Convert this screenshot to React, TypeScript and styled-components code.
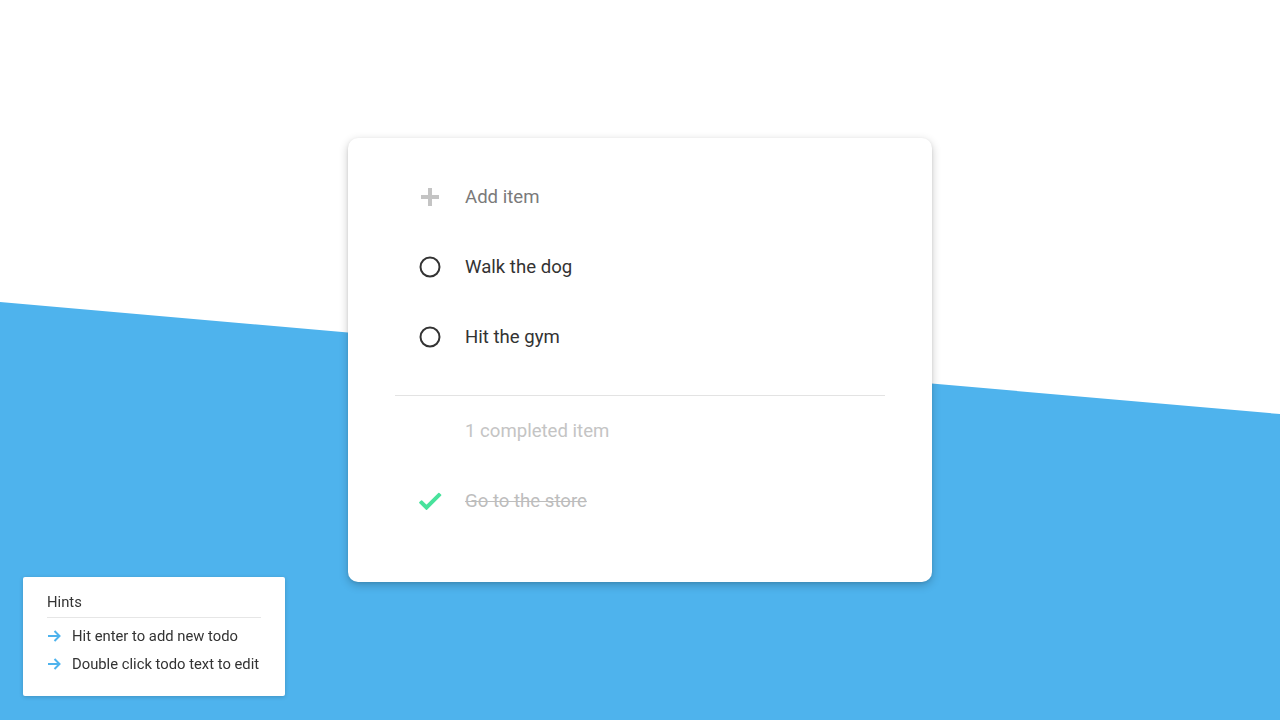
import * as React from 'react';
import styled, {createGlobalStyle} from 'styled-components';

const GlobalStyle = createGlobalStyle`
  html, body {
    margin: 0;
    padding: 0;
    background: #fff;
    overflow: hidden;
  }
  * {
    box-sizing: border-box;
  }
`;

const Page = styled.div`
  position: relative;
  display: flex;
  flex-direction: column;
  height: 100vh;
  font-family: Roboto, 'Liberation Sans', sans-serif;

  &::before {
    content: '';
    position: absolute;
    inset: 0;
    background: #4eb3ed;
    clip-path: polygon(0 302px, 100% 414px, 100% 100%, 0 100%);
    z-index: 0;
  }
`;

const Card = styled.section`
  position: relative;
  z-index: 1;
  align-self: center;
  width: 584px;
  margin-top: 138px;
  padding: 24px 47px 46px;
  background: #fff;
  border-radius: 10px;
  box-shadow: 0 3px 10px rgba(0, 0, 0, 0.22), 0 1px 3px rgba(0, 0, 0, 0.08);
`;

const Row = styled.div`
  display: flex;
  align-items: center;
  height: 70px;
`;

const IconCell = styled.div`
  display: flex;
  align-items: center;
  justify-content: center;
  width: 70px;
  height: 100%;
  flex-shrink: 0;
`;

type Tone = 'placeholder' | 'normal' | 'label' | 'done';

const toneColor: Record<Tone, string> = {
  placeholder: '#7a7a7a',
  normal: '#333',
  label: '#c4c4c4',
  done: '#bdbdbd'
};

const ItemText = styled.span<{$tone: Tone}>`
  font-size: 18.6px;
  line-height: 22px;
  color: ${({$tone}) => toneColor[$tone]};
  text-decoration: ${({$tone}) => ($tone === 'done' ? 'line-through' : 'none')};
  text-decoration-thickness: 1px;
`;

const Divider = styled.hr`
  margin: 23px 0 0;
  border: 0;
  border-top: 1px solid #e3e3e3;
`;

// floating help panel pinned to the lower left corner
const Hints = styled.aside`
  position: fixed;
  left: 23px;
  bottom: 24px;
  z-index: 2;
  width: 262px;
  padding: 17px 24px 18px;
  background: #fff;
  border-radius: 2px;
  box-shadow: 0 1px 4px rgba(0, 0, 0, 0.18);
  font-family: Roboto, 'Liberation Sans', sans-serif;
  color: #333;
`;

const HintsTitle = styled.div`
  font-size: 14.8px;
  line-height: 17px;
  padding-bottom: 6px;
  border-bottom: 1px solid #e6e6e6;
  margin-bottom: 4px;
`;

const HintRow = styled.div`
  display: flex;
  align-items: center;
  gap: 11px;
  height: 28px;
  font-size: 14.8px;
  white-space: nowrap;
`;

const PlusIcon = () => (
  <svg width="22" height="22" viewBox="0 0 22 22">
    <path d="M11 2v18M2 11h18" stroke="#c4c4c4" strokeWidth="4" />
  </svg>
);

const CircleIcon = () => (
  <svg width="24" height="24" viewBox="0 0 24 24">
    <circle cx="12" cy="12" r="9.5" fill="none" stroke="#333" strokeWidth="2" />
  </svg>
);

const CheckIcon = () => (
  <svg width="28" height="28" viewBox="0 0 24 24">
    <path
      d="M9 16.2L4.8 12l-1.4 1.4L9 19 21 7l-1.4-1.4L9 16.2z"
      fill="#48e29c"
      stroke="#48e29c"
      strokeWidth="1.4"
      strokeLinejoin="round"
    />
  </svg>
);

const ArrowIcon = () => (
  <svg width="14" height="14" viewBox="0 0 14 14">
    <path
      d="M1 7h11.5M7.5 2L12.5 7l-5 5"
      fill="none"
      stroke="#4eb3ed"
      strokeWidth="2"
    />
  </svg>
);

const todos = ['Walk the dog', 'Hit the gym'];
const completed = ['Go to the store'];

export default function App() {
  return (
    <Page>
      <GlobalStyle />
      <Card>
        <Row>
          <IconCell>
            <PlusIcon />
          </IconCell>
          <ItemText $tone="placeholder">Add item</ItemText>
        </Row>
        {todos.map(todo => (
          <Row key={todo}>
            <IconCell>
              <CircleIcon />
            </IconCell>
            <ItemText $tone="normal">{todo}</ItemText>
          </Row>
        ))}
        <Divider />
        <Row>
          <IconCell />
          <ItemText $tone="label">{completed.length} completed item</ItemText>
        </Row>
        {completed.map(todo => (
          <Row key={todo}>
            <IconCell>
              <CheckIcon />
            </IconCell>
            <ItemText $tone="done">{todo}</ItemText>
          </Row>
        ))}
      </Card>
      <Hints>
        <HintsTitle>Hints</HintsTitle>
        <HintRow>
          <ArrowIcon />
          Hit enter to add new todo
        </HintRow>
        <HintRow>
          <ArrowIcon />
          Double click todo text to edit
        </HintRow>
      </Hints>
    </Page>
  );
}
